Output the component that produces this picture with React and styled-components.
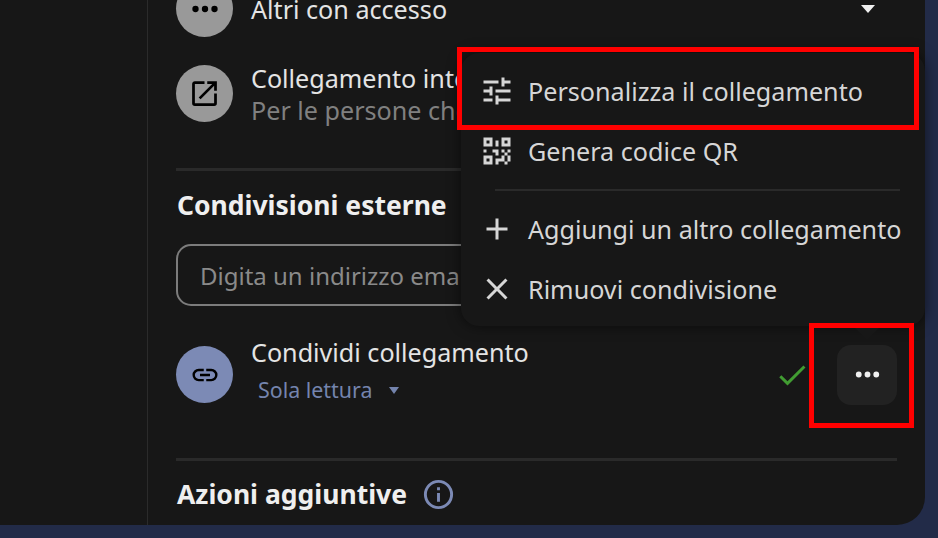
import React from 'react'
import styled, { createGlobalStyle } from 'styled-components'

const GlobalStyle = createGlobalStyle`
  html, body {
    margin: 0;
    padding: 0;
    background: #222b48;
  }
  body {
    font-family: "Noto Sans", "Liberation Sans", sans-serif;
  }
`

const Page = styled.div`
  position: relative;
  width: 938px;
  height: 538px;
  overflow: hidden;
  background: #222b48;
`

const Panel = styled.div`
  position: relative;
  display: flex;
  width: 925px;
  height: 525px;
  background: #171717;
  border-bottom-right-radius: 28px;
`

const Sidebar = styled.aside`
  flex: 0 0 147px;
  border-right: 1px solid #2b2b2b;
`

const Content = styled.main`
  flex: 1;
  min-width: 0;
  display: flex;
  flex-direction: column;
  justify-content: flex-end;
  overflow: hidden;
  padding: 0 28px 14px 28px;
`

const Row = styled.div`
  display: flex;
  align-items: center;
  flex-shrink: 0;
  gap: 18px;
  height: 57px;
  margin-top: ${(p) => p.$top || 0}px;
`

const Avatar = styled.div`
  flex: 0 0 57px;
  height: 57px;
  border-radius: 50%;
  display: flex;
  align-items: center;
  justify-content: center;
  background: ${(p) => (p.$accent ? '#7c8ab5' : '#999999')};
  color: #000;
`

const RowText = styled.div`
  flex: 1;
  min-width: 0;
  white-space: nowrap;
  margin-bottom: ${(p) => p.$lift || 0}px;
`

const RowTitle = styled.div`
  font-size: 25.15px;
  line-height: 32px;
  color: #e4e4e4;
`

const RowSub = styled.div`
  font-size: 25.15px;
  line-height: 32px;
  color: #808080;
`

const Permission = styled.div`
  display: flex;
  align-items: center;
  gap: 17px;
  margin: 8px 0 0 7px;
  font-size: 21.4px;
  line-height: 28px;
  color: #7484ad;
`

const Caret = styled.span`
  width: 0;
  height: 0;
  border-left: ${(p) => p.$half}px solid transparent;
  border-right: ${(p) => p.$half}px solid transparent;
  border-top: ${(p) => p.$tall}px solid ${(p) => p.$color};
`

const CaretSlot = styled.span`
  width: 4px;
`

const Divider = styled.hr`
  flex-shrink: 0;
  width: 100%;
  height: 3px;
  border: 0;
  margin: ${(p) => p.$top}px 0 0;
  background: #2a2a2a;
`

const Heading = styled.h2`
  display: flex;
  align-items: center;
  flex-shrink: 0;
  gap: 14px;
  height: 34px;
  margin: ${(p) => p.$top}px 0 0 1px;
  font-size: 26.5px;
  font-weight: 700;
  color: #efefef;
  white-space: nowrap;
`

const EmailInput = styled.input`
  flex-shrink: 0;
  box-sizing: border-box;
  width: 100%;
  height: 62px;
  margin-top: 22px;
  padding: 0 22px;
  border: 2px solid #7c7c7c;
  border-radius: 15px;
  background: #171717;
  font: 24px "Noto Sans", sans-serif;
  outline: none;
  &::placeholder {
    color: #8a8a8a;
    opacity: 1;
  }
`

const CheckMark = styled.div`
  display: flex;
  color: #419c32;
`

const MoreButton = styled.button`
  flex: 0 0 60px;
  height: 60px;
  margin-left: 9px;
  padding: 0;
  display: flex;
  align-items: center;
  justify-content: center;
  border: 0;
  border-radius: 14px;
  background: #222222;
  color: #f0f0f0;
`

const Menu = styled.div`
  position: absolute;
  left: 461px;
  top: 53px;
  width: 464px;
  height: 273px;
  box-sizing: border-box;
  padding: 8px 0;
  border-radius: 18px;
  background: #171717;
  box-shadow: 0 0 14px rgba(0, 0, 0, 0.55);
`

const MenuArrow = styled.div`
  position: absolute;
  left: 392px;
  top: 273px;
  width: 0;
  height: 0;
  border-left: 14px solid transparent;
  border-right: 14px solid transparent;
  border-top: 14px solid #171717;
`

const MenuItem = styled.div`
  display: flex;
  align-items: center;
  gap: 13px;
  height: 60px;
  padding-left: 18px;
  font-size: 25.15px;
  color: #d6d6d6;
  white-space: nowrap;
`

const MenuSeparator = styled.hr`
  height: 2px;
  border: 0;
  margin: 8px 25px 8px 34px;
  background: #2a2a2a;
`

const Marker = styled.div`
  position: absolute;
  box-sizing: border-box;
  left: ${(p) => p.$x}px;
  top: ${(p) => p.$y}px;
  width: ${(p) => p.$w}px;
  height: ${(p) => p.$h}px;
  border: 5px solid #ff0000;
  pointer-events: none;
`

const InfoBadge = styled.span`
  display: flex;
  color: #7c8ab5;
`

const Icon = ({ d, size = 36 }) => (
  <svg width={size} height={size} viewBox="0 0 24 24" fill="currentColor" aria-hidden="true">
    <path d={d} />
  </svg>
)

const icons = {
  dots: 'M16,12A2,2 0 0,1 18,10A2,2 0 0,1 20,12A2,2 0 0,1 18,14A2,2 0 0,1 16,12M10,12A2,2 0 0,1 12,10A2,2 0 0,1 14,12A2,2 0 0,1 12,14A2,2 0 0,1 10,12M4,12A2,2 0 0,1 6,10A2,2 0 0,1 8,12A2,2 0 0,1 6,14A2,2 0 0,1 4,12Z',
  open: 'M14,3V5H17.59L7.76,14.83L9.17,16.24L19,6.41V10H21V3M19,19H5V5H12V3H5C3.89,3 3,3.9 3,5V19A2,2 0 0,0 5,21H19A2,2 0 0,0 21,19V12H19V19Z',
  link: 'M3.9,12C3.9,10.29 5.29,8.9 7,8.9H11V7H7A5,5 0 0,0 2,12A5,5 0 0,0 7,17H11V15.1H7C5.29,15.1 3.9,13.71 3.9,12M8,13H16V11H8V13M17,7H13V8.9H17C18.71,8.9 20.1,10.29 20.1,12C20.1,13.71 18.71,15.1 17,15.1H13V17H17A5,5 0 0,0 22,12A5,5 0 0,0 17,7Z',
  tune: 'M3,17V19H9V17H3M3,5V7H13V5H3M13,21V19H21V17H13V15H11V21H13M7,9V11H3V13H7V15H9V9H7M21,13V11H11V13H21M15,9H17V7H21V5H17V3H15V9Z',
  qr: 'M3,11H5V13H3V11M11,5H13V9H11V5M9,11H13V15H11V13H9V11M15,11H17V13H19V11H21V13H19V15H21V19H19V21H17V19H13V21H11V17H15V15H17V13H15V11M19,19V15H17V19H19M15,3H21V9H15V3M17,5V7H19V5H17M3,3H9V9H3V3M5,5V7H7V5H5M3,15H9V21H3V15M5,17V19H7V17H5Z',
  plus: 'M19,13H13V19H11V13H5V11H11V5H13V11H19V13Z',
  close: 'M19,6.41L17.59,5L12,10.59L6.41,5L5,6.41L10.59,12L5,17.59L6.41,19L12,13.41L17.59,19L19,17.59L13.41,12L19,6.41Z',
  check: 'M21,7L9,19L3.5,13.5L4.91,12.09L9,16.17L19.59,5.59L21,7Z',
  info: 'M11,9H13V7H11M12,20C7.59,20 4,16.41 4,12C4,7.59 7.59,4 12,4C16.41,4 20,7.59 20,12C20,16.41 16.41,20 12,20M12,2A10,10 0 0,0 2,12A10,10 0 0,0 12,22A10,10 0 0,0 22,12A10,10 0 0,0 12,2M11,17H13V11H11V17Z',
}

export default function App() {
  return (
    <Page>
      <GlobalStyle />
      <Panel>
        <Sidebar />
        <Content>
          <Row>
            <Avatar>
              <Icon d={icons.dots} size={38} />
            </Avatar>
            <RowText>
              <RowTitle>Altri con accesso</RowTitle>
            </RowText>
            <Caret $half={7.5} $tall={8} $color="#f0f0f0" />
            <CaretSlot />
          </Row>
          <Row $top={28}>
            <Avatar>
              <Icon d={icons.open} size={33} />
            </Avatar>
            <RowText>
              <RowTitle>Collegamento interno</RowTitle>
              <RowSub>Per le persone che hanno già accesso</RowSub>
            </RowText>
          </Row>
          <Divider $top={46} />
          <Heading $top={17}>Condivisioni esterne</Heading>
          <EmailInput placeholder="Digita un indirizzo email" readOnly />
          <Row $top={40}>
            <Avatar $accent>
              <Icon d={icons.link} size={30} />
            </Avatar>
            <RowText $lift={9}>
              <RowTitle>Condividi collegamento</RowTitle>
              <Permission>
                Sola lettura
                <Caret $half={5} $tall={7} $color="#7484ad" />
              </Permission>
            </RowText>
            <CheckMark>
              <Icon d={icons.check} />
            </CheckMark>
            <MoreButton>
              <Icon d={icons.dots} size={35} />
            </MoreButton>
          </Row>
          <Divider $top={55} />
          <Heading $top={16}>
            Azioni aggiuntive
            <InfoBadge>
              <Icon d={icons.info} size={35} />
            </InfoBadge>
          </Heading>
        </Content>
        <Menu>
          <MenuItem>
            <Icon d={icons.tune} />
            Personalizza il collegamento
          </MenuItem>
          <MenuItem>
            <Icon d={icons.qr} />
            Genera codice QR
          </MenuItem>
          <MenuSeparator />
          <MenuItem>
            <Icon d={icons.plus} />
            Aggiungi un altro collegamento
          </MenuItem>
          <MenuItem>
            <Icon d={icons.close} />
            Rimuovi condivisione
          </MenuItem>
          <MenuArrow />
        </Menu>
      </Panel>
      <Marker $x={457} $y={47} $w={462} $h={83} />
      <Marker $x={809} $y={323} $w={105} $h={105} />
    </Page>
  )
}
